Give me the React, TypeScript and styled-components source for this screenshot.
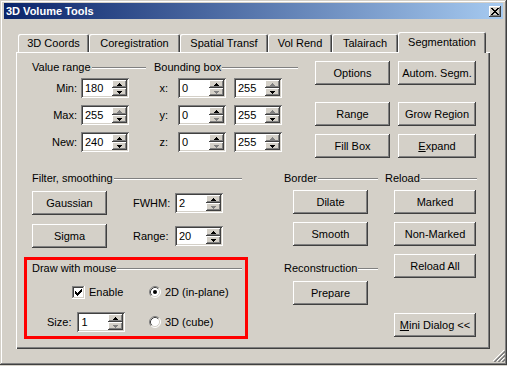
import React from "react";
import styled, { createGlobalStyle } from "styled-components";

const face = "#d4d0c8";
const shadow = "#808080";
const dark = "#404040";
const light = "#ffffff";

const raised = `box-shadow: inset -1px -1px ${dark}, inset 1px 1px ${light}, inset -2px -2px ${shadow}, inset 2px 2px ${face};`;
const sunken = `box-shadow: inset 1px 1px ${shadow}, inset -1px -1px ${light}, inset 2px 2px ${dark}, inset -2px -2px ${face};`;

const GlobalStyle = createGlobalStyle`
  html, body {
    margin: 0;
    padding: 0;
    background: ${face};
  }
  body {
    font-family: "Liberation Sans", Arial, sans-serif;
    font-size: 11px;
    color: #000;
  }
`;

const Window = styled.div`
  position: relative;
  width: 507px;
  height: 365px;
  box-sizing: border-box;
  padding: 3px 4px 4px;
  background: ${face};
  box-shadow: inset -1px -1px ${dark}, inset 1px 1px ${face}, inset -2px -2px ${shadow}, inset 2px 2px ${light};
`;

const TitleBar = styled.div`
  display: flex;
  align-items: center;
  justify-content: space-between;
  height: 16px;
  padding: 0 2px;
  background: linear-gradient(to right, #0a246a, #a6caf0);
`;

const Title = styled.span`
  color: #fff;
  font-weight: bold;
  font-size: 11px;
  line-height: 16px;
`;

const CloseBox = styled.div`
  display: flex;
  align-items: center;
  justify-content: center;
  width: 12px;
  height: 11px;
  background: ${face};
  ${raised}
`;

const TabStrip = styled.div`
  display: flex;
  align-items: flex-end;
  height: 20px;
  margin: 13px 0 0 12px;
  padding-left: 2px;
  position: relative;
  z-index: 1;
`;

const Tab = styled.div<{ $w: number; $active?: boolean }>`
  width: ${(p) => p.$w}px;
  height: ${(p) => (p.$active ? 21 : 18)}px;
  margin-bottom: ${(p) => (p.$active ? -1 : 0)}px;
  box-sizing: border-box;
  display: flex;
  align-items: center;
  justify-content: center;
  padding-bottom: ${(p) => (p.$active ? 2 : 0)}px;
  background: ${face};
  border-radius: 2px 2px 0 0;
  box-shadow: inset 1px 1px ${light}, inset -1px 0 ${dark}, inset -2px 0 ${shadow};
  white-space: nowrap;
`;

const Panel = styled.div`
  width: 474px;
  height: 297px;
  margin-left: 12px;
  box-sizing: border-box;
  display: flex;
  flex-direction: column;
  box-shadow: inset 1px 1px ${light}, inset -1px -1px ${dark}, inset -2px -2px ${shadow};
`;

const TopArea = styled.div`
  display: flex;
  height: 120px;
  box-sizing: border-box;
  padding: 9px 0 0 16px;
`;

const Group = styled.div<{ $w: number; $ml?: number }>`
  width: ${(p) => p.$w}px;
  margin-left: ${(p) => p.$ml ?? 0}px;
`;

const GroupHeader = styled.div`
  display: flex;
  align-items: center;
  height: 13px;
  line-height: 13px;
  white-space: nowrap;
`;

const Etched = styled.span`
  flex: 1;
  margin-left: 1px;
  border-top: 1px solid ${shadow};
  border-bottom: 1px solid ${light};
`;

const FieldGrid = styled.div<{ $cols: string; $gap: number }>`
  display: grid;
  grid-template-columns: ${(p) => p.$cols};
  column-gap: ${(p) => p.$gap}px;
  row-gap: 7px;
  margin-top: 4px;
  align-items: center;
`;

const FieldLabel = styled.span<{ $pr?: number }>`
  text-align: right;
  padding-right: ${(p) => p.$pr ?? 0}px;
  white-space: nowrap;
`;

const ButtonGrid = styled.div`
  display: grid;
  grid-template-columns: 75px 78px;
  grid-template-rows: 33px 24px 24px;
  column-gap: 8px;
  row-gap: 8px;
  align-items: start;
  margin-left: 17px;
`;

const Button = styled.button<{ $w?: number }>`
  width: ${(p) => p.$w ?? 75}px;
  height: 24px;
  padding: 0;
  border: 0;
  background: ${face};
  ${raised}
  font: inherit;
  color: #000;
  white-space: nowrap;
`;

const SpinBox = styled.div`
  display: flex;
  width: 48px;
  height: 20px;
  box-sizing: border-box;
  padding: 2px;
  background: #fff;
  ${sunken}
`;

const SpinValue = styled.span`
  flex: 1;
  padding-left: 2px;
  line-height: 16px;
`;

const SpinButtons = styled.div`
  display: flex;
  flex-direction: column;
  width: 15px;
`;

const SpinButton = styled.div`
  flex: 1;
  display: flex;
  align-items: center;
  justify-content: center;
  background: ${face};
  ${raised}
`;

const BottomArea = styled.div`
  display: flex;
  padding-left: 8px;
`;

const LeftColumn = styled.div`
  width: 224px;
`;

const FilterGroup = styled.div`
  padding: 0 6px 0 8px;
`;

const FilterGrid = styled.div`
  display: grid;
  grid-template-columns: 101px 42px 48px;
  grid-template-rows: 24px 24px;
  row-gap: 9px;
  margin-top: 6px;
  align-items: center;
`;

const DrawGroup = styled.div`
  height: 82px;
  margin-top: 9px;
  box-sizing: border-box;
  border: 3px solid #ff0000;
  padding: 2px 3px 0 5px;
`;

const DrawGrid = styled.div`
  display: grid;
  grid-template-columns: 122px 1fr;
  grid-template-rows: 20px 20px;
  row-gap: 10px;
  margin: 7px 0 0 -5px;
  align-items: center;
`;

const Cell = styled.div<{ $pl?: number; $gap: number }>`
  display: flex;
  align-items: center;
  gap: ${(p) => p.$gap}px;
  padding-left: ${(p) => p.$pl ?? 0}px;
`;

const RightArea = styled.div`
  display: flex;
  margin-left: 36px;
  gap: 7px;
`;

const SideColumn = styled.div<{ $w: number }>`
  width: ${(p) => p.$w}px;
  display: flex;
  flex-direction: column;
`;

const ButtonStack = styled.div<{ $mt?: number }>`
  display: flex;
  flex-direction: column;
  gap: 8px;
  padding-left: 9px;
  margin-top: ${(p) => p.$mt ?? 5}px;
`;

const Spaced = styled.div<{ $mt: number }>`
  margin-top: ${(p) => p.$mt}px;
`;

const Mnemonic = styled.span`
  text-decoration: underline;
`;

const Grip = styled.svg`
  position: absolute;
  right: 2px;
  bottom: 3px;
`;

const Arrow = ({ up, off }: { up?: boolean; off?: boolean }) => (
  <svg width="5" height="3" viewBox="0 0 5 3" shapeRendering="crispEdges">
    <path
      d={up ? "M2 0h1v1h-1zM1 1h3v1h-3zM0 2h5v1h-5z" : "M0 0h5v1h-5zM1 1h3v1h-3zM2 2h1v1h-1z"}
      fill={off ? shadow : "#000"}
    />
  </svg>
);

const Spin = ({ value, upOff, downOff }: { value: string; upOff?: boolean; downOff?: boolean }) => (
  <SpinBox>
    <SpinValue>{value}</SpinValue>
    <SpinButtons>
      <SpinButton>
        <Arrow up off={upOff} />
      </SpinButton>
      <SpinButton>
        <Arrow off={downOff} />
      </SpinButton>
    </SpinButtons>
  </SpinBox>
);

const Checkbox = () => (
  <svg width="13" height="13" viewBox="0 0 13 13" shapeRendering="crispEdges">
    <rect x="0" y="0" width="13" height="13" fill={light} />
    <path d="M0 0h12v1h-11v11h-1z" fill={shadow} />
    <path d="M1 1h10v1h-9v9h-1z" fill={dark} />
    <path d="M1 11h11v1h-11zM11 1h1v11h-1z" fill={face} />
    <path
      d="M3 5h1v3h-1zM4 6h1v3h-1zM5 7h1v3h-1zM6 6h1v3h-1zM7 5h1v3h-1zM8 4h1v3h-1zM9 3h1v3h-1z"
      fill="#000"
    />
  </svg>
);

const Radio = ({ checked }: { checked?: boolean }) => (
  <svg width="12" height="12" viewBox="0 0 12 12">
    <circle cx="6" cy="6" r="5" fill={light} />
    <path d="M2.11 9.89 A5.5 5.5 0 0 1 9.89 2.11" fill="none" stroke={shadow} strokeWidth="1" />
    <path d="M9.89 2.11 A5.5 5.5 0 0 1 2.11 9.89" fill="none" stroke={light} strokeWidth="1" />
    <path d="M2.82 9.18 A4.5 4.5 0 0 1 9.18 2.82" fill="none" stroke={dark} strokeWidth="1" />
    <path d="M9.18 2.82 A4.5 4.5 0 0 1 2.82 9.18" fill="none" stroke={face} strokeWidth="1" />
    {checked && <circle cx="6" cy="6" r="2" fill="#000" />}
  </svg>
);

const tabs = [
  { label: "3D Coords", w: 71 },
  { label: "Coregistration", w: 91 },
  { label: "Spatial Transf", w: 88 },
  { label: "Vol Rend", w: 64 },
  { label: "Talairach", w: 66 },
  { label: "Segmentation", w: 88, active: true },
];

export default function App() {
  return (
    <>
      <GlobalStyle />
      <Window>
        <TitleBar>
          <Title>3D Volume Tools</Title>
          <CloseBox>
            <svg width="8" height="7" viewBox="0 0 8 7" shapeRendering="crispEdges">
              <path
                d="M0 0h2v1h-2zM6 0h2v1h-2zM1 1h2v1h-2zM5 1h2v1h-2zM2 2h4v1h-4zM3 3h2v1h-2zM2 4h4v1h-4zM1 5h2v1h-2zM5 5h2v1h-2zM0 6h2v1h-2zM6 6h2v1h-2z"
                fill="#000"
              />
            </svg>
          </CloseBox>
        </TitleBar>

        <TabStrip>
          {tabs.map((t) => (
            <Tab key={t.label} $w={t.w} $active={t.active}>
              {t.label}
            </Tab>
          ))}
        </TabStrip>

        <Panel>
          <TopArea>
            <Group $w={114}>
              <GroupHeader>
                Value range<Etched />
              </GroupHeader>
              <FieldGrid $cols="45px 48px" $gap={4}>
                <FieldLabel>Min:</FieldLabel>
                <Spin value="180" />
                <FieldLabel>Max:</FieldLabel>
                <Spin value="255" upOff />
                <FieldLabel>New:</FieldLabel>
                <Spin value="240" />
              </FieldGrid>
            </Group>

            <Group $w={144} $ml={8}>
              <GroupHeader>
                Bounding box<Etched />
              </GroupHeader>
              <FieldGrid $cols="16px 48px 48px" $gap={8}>
                <FieldLabel $pr={2}>x:</FieldLabel>
                <Spin value="0" downOff />
                <Spin value="255" upOff />
                <FieldLabel $pr={2}>y:</FieldLabel>
                <Spin value="0" downOff />
                <Spin value="255" upOff />
                <FieldLabel $pr={2}>z:</FieldLabel>
                <Spin value="0" downOff />
                <Spin value="255" upOff />
              </FieldGrid>
            </Group>

            <ButtonGrid>
              <Button>Options</Button>
              <Button $w={78}>Autom. Segm.</Button>
              <Button>Range</Button>
              <Button $w={78}>Grow Region</Button>
              <Button>Fill Box</Button>
              <Button $w={78}>
                <Mnemonic>E</Mnemonic>xpand
              </Button>
            </ButtonGrid>
          </TopArea>

          <BottomArea>
            <LeftColumn>
              <FilterGroup>
                <GroupHeader>
                  Filter, smoothing<Etched />
                </GroupHeader>
                <FilterGrid>
                  <Button>Gaussian</Button>
                  <span>FWHM:</span>
                  <Spin value="2" downOff />
                  <Button>Sigma</Button>
                  <span>Range:</span>
                  <Spin value="20" />
                </FilterGrid>
              </FilterGroup>

              <DrawGroup>
                <GroupHeader>
                  Draw with mouse<Etched />
                </GroupHeader>
                <DrawGrid>
                  <Cell $pl={45} $gap={4}>
                    <Checkbox />
                    Enable
                  </Cell>
                  <Cell $gap={4}>
                    <Radio checked />
                    2D (in-plane)
                  </Cell>
                  <Cell $pl={20} $gap={6}>
                    Size:
                    <Spin value="1" downOff />
                  </Cell>
                  <Cell $gap={4}>
                    <Radio />
                    3D (cube)
                  </Cell>
                </DrawGrid>
              </DrawGroup>
            </LeftColumn>

            <RightArea>
              <SideColumn $w={94}>
                <GroupHeader>
                  Border<Etched />
                </GroupHeader>
                <ButtonStack>
                  <Button>Dilate</Button>
                  <Button>Smooth</Button>
                </ButtonStack>
                <Spaced $mt={16}>
                  <GroupHeader>
                    Reconstruction<Etched />
                  </GroupHeader>
                </Spaced>
                <ButtonStack $mt={6}>
                  <Button>Prepare</Button>
                </ButtonStack>
              </SideColumn>

              <SideColumn $w={92}>
                <GroupHeader>
                  Reload<Etched />
                </GroupHeader>
                <ButtonStack>
                  <Button $w={82}>Marked</Button>
                  <Button $w={82}>Non-Marked</Button>
                  <Button $w={82}>Reload All</Button>
                </ButtonStack>
                <ButtonStack $mt={35}>
                  <Button $w={82}>
                    <Mnemonic>M</Mnemonic>ini Dialog &lt;&lt;
                  </Button>
                </ButtonStack>
              </SideColumn>
            </RightArea>
          </BottomArea>
        </Panel>

        <Grip width="12" height="12" viewBox="0 0 12 12" shapeRendering="crispEdges">
          <path d="M11 0L0 11M11 4L4 11M11 8L8 11" stroke={light} strokeWidth="1" />
          <path d="M12 1L1 12M12 2L2 12M12 5L5 12M12 6L6 12M12 9L9 12M12 10L10 12" stroke={shadow} strokeWidth="1" />
        </Grip>
      </Window>
    </>
  );
}
